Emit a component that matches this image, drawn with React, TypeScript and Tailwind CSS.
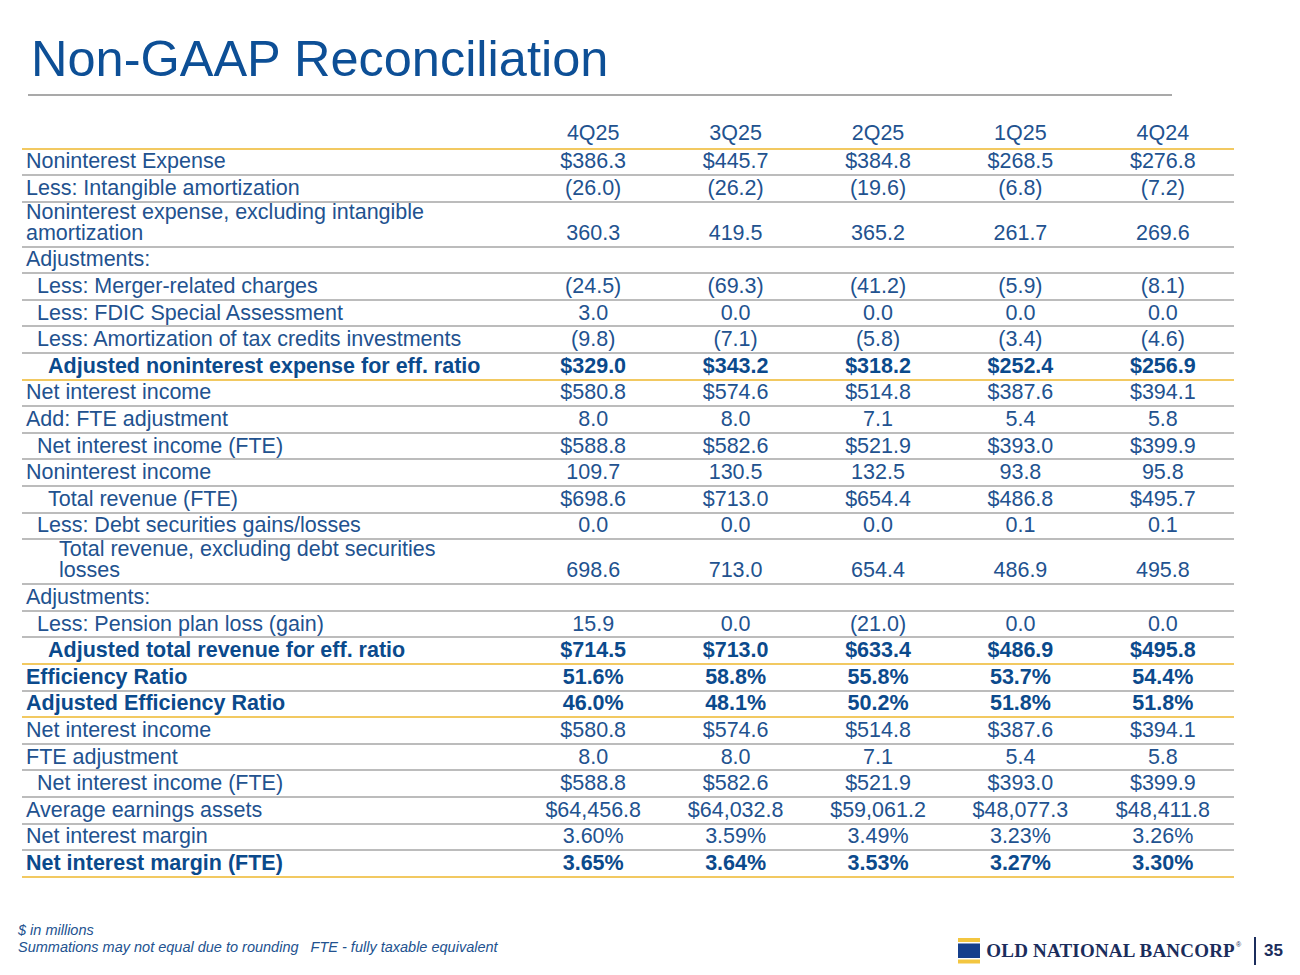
import React from 'react'

type Row = {
  label: string
  values: string[]
  indent?: 0 | 1 | 2 | 3
  bold?: boolean
  tall?: boolean
  gold?: boolean
}

const quarters = ['4Q25', '3Q25', '2Q25', '1Q25', '4Q24']

const rows: Row[] = [
  { label: 'Noninterest Expense', values: ['$386.3', '$445.7', '$384.8', '$268.5', '$276.8'] },
  { label: 'Less: Intangible amortization', values: ['(26.0)', '(26.2)', '(19.6)', '(6.8)', '(7.2)'] },
  { label: 'Noninterest expense, excluding intangible amortization', values: ['360.3', '419.5', '365.2', '261.7', '269.6'], tall: true },
  { label: 'Adjustments:', values: ['', '', '', '', ''] },
  { label: 'Less: Merger-related charges', values: ['(24.5)', '(69.3)', '(41.2)', '(5.9)', '(8.1)'], indent: 1 },
  { label: 'Less: FDIC Special Assessment', values: ['3.0', '0.0', '0.0', '0.0', '0.0'], indent: 1 },
  { label: 'Less: Amortization of tax credits investments', values: ['(9.8)', '(7.1)', '(5.8)', '(3.4)', '(4.6)'], indent: 1 },
  { label: 'Adjusted noninterest expense for eff. ratio', values: ['$329.0', '$343.2', '$318.2', '$252.4', '$256.9'], indent: 2, bold: true, gold: true },
  { label: 'Net interest income', values: ['$580.8', '$574.6', '$514.8', '$387.6', '$394.1'] },
  { label: 'Add: FTE adjustment', values: ['8.0', '8.0', '7.1', '5.4', '5.8'] },
  { label: 'Net interest income (FTE)', values: ['$588.8', '$582.6', '$521.9', '$393.0', '$399.9'], indent: 1 },
  { label: 'Noninterest income', values: ['109.7', '130.5', '132.5', '93.8', '95.8'] },
  { label: 'Total revenue (FTE)', values: ['$698.6', '$713.0', '$654.4', '$486.8', '$495.7'], indent: 2 },
  { label: 'Less: Debt securities gains/losses', values: ['0.0', '0.0', '0.0', '0.1', '0.1'], indent: 1 },
  { label: 'Total revenue, excluding debt securities losses', values: ['698.6', '713.0', '654.4', '486.9', '495.8'], indent: 3, tall: true },
  { label: 'Adjustments:', values: ['', '', '', '', ''] },
  { label: 'Less: Pension plan loss (gain)', values: ['15.9', '0.0', '(21.0)', '0.0', '0.0'], indent: 1 },
  { label: 'Adjusted total revenue for eff. ratio', values: ['$714.5', '$713.0', '$633.4', '$486.9', '$495.8'], indent: 2, bold: true, gold: true },
  { label: 'Efficiency Ratio', values: ['51.6%', '58.8%', '55.8%', '53.7%', '54.4%'], bold: true },
  { label: 'Adjusted Efficiency Ratio', values: ['46.0%', '48.1%', '50.2%', '51.8%', '51.8%'], bold: true, gold: true },
  { label: 'Net interest income', values: ['$580.8', '$574.6', '$514.8', '$387.6', '$394.1'] },
  { label: 'FTE adjustment', values: ['8.0', '8.0', '7.1', '5.4', '5.8'] },
  { label: 'Net interest income (FTE)', values: ['$588.8', '$582.6', '$521.9', '$393.0', '$399.9'], indent: 1 },
  { label: 'Average earnings assets', values: ['$64,456.8', '$64,032.8', '$59,061.2', '$48,077.3', '$48,411.8'] },
  { label: 'Net interest margin', values: ['3.60%', '3.59%', '3.49%', '3.23%', '3.26%'] },
  { label: 'Net interest margin (FTE)', values: ['3.65%', '3.64%', '3.53%', '3.27%', '3.30%'], bold: true, gold: true },
]

const indentClass = ['pl-[4px]', 'pl-[15px]', 'pl-[26px]', 'pl-[37px]']

const TableRow: React.FC<{ row: Row }> = ({ row }) => {
  const border = row.gold ? 'border-[#f2c961]' : 'border-[#bcbcbc]'
  const weight = row.bold ? 'font-bold text-[#0b4a8c]' : 'text-[#22528f]'
  return (
    <div
      className={`flex border-b-2 ${border} ${weight} ${
        row.tall ? 'h-[45px] items-end pb-[2px]' : 'h-[26.6px] items-center'
      }`}
    >
      <div className={`w-[500px] shrink-0 leading-[21px] ${indentClass[row.indent ?? 0]} ${row.tall ? 'pr-[70px]' : ''}`}>
        {row.label}
      </div>
      {row.values.map((v, i) => (
        <div key={i} className="flex-1 text-center leading-[21px]">
          {v}
        </div>
      ))}
    </div>
  )
}

const Logo = () => (
  <div className="flex items-center">
    <svg width="22" height="26" viewBox="0 0 22 26" className="mr-[6px]">
      <rect x="0" y="0" width="22" height="4" fill="#f3c640" />
      <rect x="0" y="5.5" width="22" height="14.5" fill="#163f8c" />
      <rect x="0" y="21.5" width="22" height="4" fill="#f3c640" />
    </svg>
    <span
      className="text-[19px] font-bold tracking-[0.2px] text-[#1b2d5c] leading-none"
      style={{ fontFamily: '"Liberation Serif", "DejaVu Serif", serif' }}
    >
      OLD NATIONAL BANCORP
    </span>
    <span className="self-start text-[7px] text-[#1b2d5c] ml-[1px] mt-[2px]">®</span>
  </div>
)

export default function App() {
  return (
    <div
      className="w-[1300px] h-[975px] bg-white overflow-hidden"
      style={{ fontFamily: '"Liberation Sans", Arial, sans-serif' }}
    >
      <h1 className="pt-[34px] ml-[31px] text-[50.5px] leading-none text-[#0d4f96]">
        Non-GAAP Reconciliation
      </h1>
      <div className="mt-[9px] ml-[28px] w-[1144px] h-[2px] bg-[#a9a9a9]" />

      <div className="mt-[23px] ml-[22px] w-[1212px] text-[21.5px]">
        <div className="flex h-[31px] items-center border-b-2 border-[#f2c961] text-[#22528f]">
          <div className="w-[500px] shrink-0" />
          {quarters.map((q) => (
            <div key={q} className="flex-1 text-center leading-[21px]">
              {q}
            </div>
          ))}
        </div>
        {rows.map((row, i) => (
          <TableRow key={i} row={row} />
        ))}
      </div>

      <div className="mt-[44px] flex items-start justify-between pl-[18px] pr-[17px]">
        <div className="text-[14.5px] italic leading-[17px] text-[#22528f]">
          <div>$ in millions</div>
          <div className="whitespace-pre">Summations may not equal due to rounding   FTE - fully taxable equivalent</div>
        </div>
        <div className="mt-[15px] flex items-center">
          <Logo />
          <div className="ml-[13px] w-[2px] h-[28px] bg-[#1b2d5c]" />
          <div className="ml-[8px] text-[17px] font-bold text-[#1b2d5c] leading-none">35</div>
        </div>
      </div>
    </div>
  )
}
